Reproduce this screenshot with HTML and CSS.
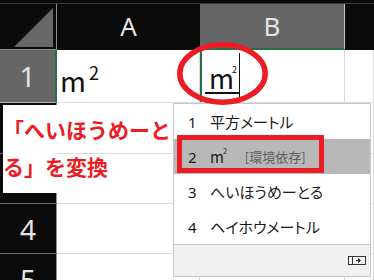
FILE: index.html
```html
<!DOCTYPE html>
<html lang="ja">
<head>
    <meta charset="UTF-8">
    <meta name="viewport" content="width=device-width, initial-scale=1.0">
    <title>平方メートル変換</title>
    <link rel="stylesheet" href="styles.css">
</head>
<body>
    <div class="sheet">
        <div class="strip"></div>

        <div class="corner">
            <svg width="56" height="46" viewBox="0 0 56 46"><polygon points="14,43 53,43 53,4" fill="#686868"/></svg>
        </div>
        <div class="colhead">A</div>
        <div class="colhead sel">B</div>
        <div class="colhead"></div>

        <div class="rowhead sel">1</div>
        <div class="cell"><span class="val">m<sup>2</sup></span></div>
        <div class="cell edit">
            <span class="typing">m<sup>2</sup></span><span class="caret"></span>
        </div>
        <div class="cell"></div>

        <div class="rowhead"></div>
        <div class="cell"></div>
        <div class="cell"></div>
        <div class="cell"></div>

        <div class="rowhead"></div>
        <div class="cell"></div>
        <div class="cell"></div>
        <div class="cell"></div>

        <div class="rowhead">4</div>
        <div class="cell"></div>
        <div class="cell"></div>
        <div class="cell"></div>

        <div class="rowhead">5</div>
        <div class="cell"></div>
        <div class="cell"></div>
        <div class="cell"></div>
    </div>

    <div class="note">「へいほうめーと<br>る」を変換</div>

    <div class="ime">
        <div class="item"><span class="num">1</span><span class="word">平方メートル</span></div>
        <div class="item on"><span class="num">2</span><span class="word">m<sup>2</sup></span><span class="tag">[環境依存]</span></div>
        <div class="item"><span class="num">3</span><span class="word">へいほうめーとる</span></div>
        <div class="item"><span class="num">4</span><span class="word">ヘイホウメートル</span></div>
        <div class="ime-foot">
            <svg width="18" height="9" viewBox="0 0 18 9">
                <rect x="0.5" y="0.5" width="17" height="8" fill="none" stroke="#333"/>
                <line x1="4.5" y1="0.5" x2="4.5" y2="8.5" stroke="#333"/>
                <path d="M8 4.5h4M10.5 2.5l2 2-2 2z" fill="#333" stroke="#333"/>
            </svg>
        </div>
    </div>

    <div class="mark"></div>

    <svg class="ring" width="106" height="76" viewBox="0 0 106 76">
        <ellipse cx="52.5" cy="37.5" rx="42.7" ry="28.7" fill="none" stroke="#ec1c24" stroke-width="5.5"/>
    </svg>
</body>
</html>
```

FILE: styles.css
```css
body {
    margin: 0;
    width: 374px;
    height: 280px;
    overflow: hidden;
    position: relative;
    background-color: #0b0b0b;
    font-family: "Noto Sans", "Noto Sans CJK JP", sans-serif;
}
.sheet {
    display: grid;
    grid-template-columns: 57px 143px 145px 29px;
    grid-template-rows: 4px 46px 53px 51px 50px 50px 50px;
}
.strip {
    grid-column: 1 / -1;
    background-color: #0b0b0b;
    border-bottom: 1px solid #3a3a3a;
}
.corner {
    background-color: #0b0b0b;
    border-right: 1px solid #8e8e8e;
    border-bottom: 1px solid #8e8e8e;
    box-sizing: border-box;
}
.corner svg {
    display: block;
}
.colhead {
    background-color: #0b0b0b;
    color: #e4e4e4;
    font-size: 26px;
    display: flex;
    align-items: center;
    justify-content: center;
    padding-bottom: 3px;
    box-sizing: border-box;
}
.colhead.sel {
    background-color: #666;
    border-bottom: 2px solid #217346;
    border-right: 1px solid #c4c4c4;
    padding-bottom: 1px;
}
.rowhead {
    background-color: #0b0b0b;
    color: #e4e4e4;
    font-size: 28px;
    display: flex;
    align-items: center;
    justify-content: center;
    border-right: 1px solid #8e8e8e;
    border-bottom: 1px solid #6e6e6e;
    box-sizing: border-box;
}
.rowhead.sel {
    background-color: #666;
    border-right: 2px solid #217346;
    border-bottom: 1px solid #b5b5b5;
}
.cell {
    background-color: #fff;
    border-right: 1px solid #dadada;
    border-bottom: 1px solid #dadada;
    box-sizing: border-box;
    font-family: "Noto Sans CJK JP", sans-serif;
    color: #111;
    display: flex;
    align-items: center;
}
.val {
    font-size: 28px;
    line-height: 1;
    padding: 5px 0 0 3px;
}
.val sup {
    font-size: 18px;
    vertical-align: 12px;
    margin-left: 3px;
}
.edit {
    box-shadow: inset 2px 0 0 #217346;
    position: relative;
}
.typing {
    font-size: 27px;
    line-height: 1;
    margin: 6px 0 0 5px;
    padding: 0 2px 1px 4px;
    border-bottom: 2px solid #111;
}
.typing sup {
    font-size: 9px;
    vertical-align: 16px;
    margin-left: -2px;
}
.caret {
    align-self: stretch;
    width: 1px;
    margin: 3px 0 3px 0;
    background-color: #111;
}
.note {
    position: absolute;
    left: 3px;
    top: 105px;
    width: 54px;
    height: 88px;
    padding-top: 6px;
    box-sizing: border-box;
    background-color: #fff;
    white-space: nowrap;
    color: #ec1c24;
    font-family: "Noto Sans CJK JP", sans-serif;
    font-weight: bold;
    font-size: 21px;
    line-height: 37px;
}
.ime {
    position: absolute;
    left: 173px;
    top: 103px;
    width: 198px;
    border: 1px solid #c8c8c8;
    box-sizing: border-box;
    background-color: #fff;
    color: #1a1a1a;
}
.item {
    height: 35px;
    display: flex;
    align-items: center;
    font-size: 15px;
}
.item.on {
    background-color: #b8b8b8;
}
.num {
    width: 22px;
    padding-left: 14px;
    font-family: "Noto Sans", sans-serif;
}
.word {
    font-family: "Noto Sans CJK JP", sans-serif;
    font-feature-settings: "palt";
}
.word sup {
    font-size: 7px;
    vertical-align: 9px;
    margin-left: -1px;
}
.tag {
    margin-left: 18px;
    font-family: "Noto Sans CJK JP", sans-serif;
    font-feature-settings: "palt";
    font-size: 13px;
    color: #5e5e5e;
}
.ime-foot {
    height: 31px;
    border-top: 1px solid #c8c8c8;
    background-color: #f0f0f0;
    display: flex;
    align-items: center;
    justify-content: flex-end;
    padding-right: 4px;
}
.ime-foot svg {
    display: block;
}
.mark {
    position: absolute;
    left: 177px;
    top: 135px;
    width: 147px;
    height: 38px;
    border: 5px solid #ec1c24;
    box-sizing: border-box;
}
.ring {
    position: absolute;
    left: 170px;
    top: 36px;
}
```
